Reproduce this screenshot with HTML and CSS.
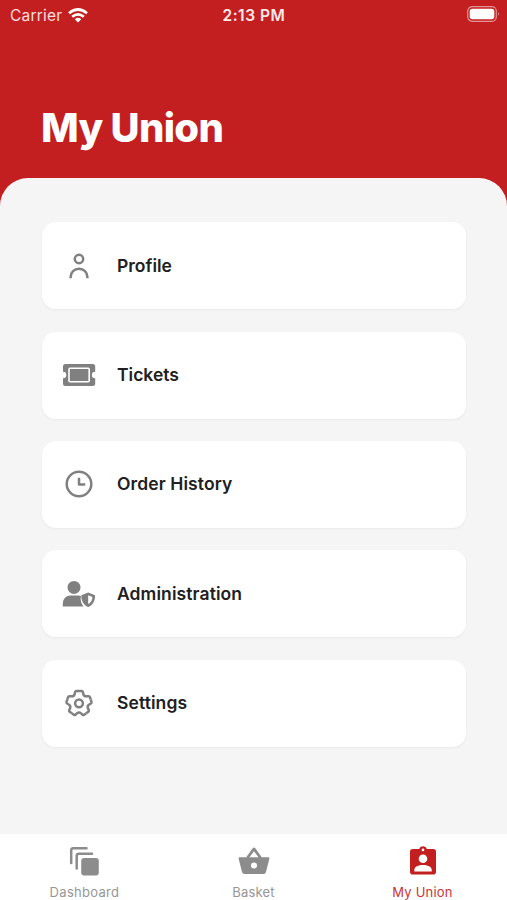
FILE: index.html
```html
<!DOCTYPE html>
<html lang="en">
<head>
<meta charset="utf-8">
<title>My Union</title>
<link rel="stylesheet" href="styles.css">
</head>
<body>
<header class="header">
  <div class="status">
    <div class="carrier"><span>Carrier</span>
      <svg width="20" height="15" viewBox="0 0 20 15" fill="none" stroke="#fff" stroke-width="2.7"><path d="M1 5.3Q10-2.3 19 5.3M4.2 8.8Q10 4 15.8 8.8"/><path d="M6.8 11.2Q10 8.4 13.2 11.2L10 14.4Z" fill="#fff" stroke="none"/></svg>
    </div>
    <span class="time">2:13 PM</span>
    <svg class="battery" width="33" height="16" viewBox="0 0 33 16"><rect x=".7" y=".7" width="28.6" height="14.6" rx="4.5" fill="none" stroke="#e49595" stroke-width="1.2"/><rect x="2.7" y="2.7" width="24.6" height="10.6" rx="2.7" fill="#fff"/><path d="M31 5.7q1.8 2.3 0 4.6z" fill="#e49595"/></svg>
  </div>
  <h1>My Union</h1>
</header>
<main class="sheet">
  <a class="card"><svg class="icon" viewBox="0 0 40 40"><g class="line"><circle cx="20" cy="13" r="4.2"/><path d="M11.600 32.300V31a8.400 8.200 0 0 1 16.800 0v1.300"/></g></svg><span>Profile</span></a>
  <a class="card"><svg class="icon" viewBox="0 0 40 40"><path d="M6.500 9h27.200a2.500 2.500 0 0 1 2.500 2.500v5.200a3.300 3.300 0 0 0 0 6.600v5.200a2.500 2.500 0 0 1-2.500 2.500H6.500A2.500 2.500 0 0 1 4 28.500v-5.200a3.300 3.300 0 0 0 0-6.600v-5.200A2.500 2.500 0 0 1 6.500 9z"/><rect x="10" y="13.300" width="20.200" height="13.400" rx="1" fill="none" stroke="#fff" stroke-width="1.600"/></svg><span>Tickets</span></a>
  <a class="card"><svg class="icon" viewBox="0 0 40 40"><g class="line"><circle cx="20" cy="20" r="12.300"/><path d="M20 13.800V20.500H26.200"/></g></svg><span class="wide">Order History</span></a>
  <a class="card"><svg class="icon" viewBox="0 0 40 40"><circle cx="15" cy="13.400" r="6.500"/><path d="M3.800 32.600v-3.500a7.500 7.500 0 0 1 7.500-7.500h8q1.700 0 2.700.5c-1 3.800.2 7.700 2.600 10.500z"/><path fill-rule="evenodd" d="M29.200 18.500l6.800 2.700c.3 5-1.700 9.600-6.800 11.900-5.100-2.300-7.100-6.900-6.800-11.900zM29.200 21.200v8.900c3-1.600 4.100-4.300 4.200-7.200z"/></svg><span class="wide">Administration</span></a>
  <a class="card"><svg class="icon" viewBox="0 0 40 40"><defs><path id="tooth" d="M0-12.300H2.600Q3.600-12.300 3.900-11.200L4.300-9.400Q4.880-6.710 7.610-7L9.450-7.170Q10.580-7.220 10.900-6.270L11.700-3.800"/></defs><g class="line" transform="translate(20 20.300)"><use href="#tooth"/><use href="#tooth" transform="rotate(72)"/><use href="#tooth" transform="rotate(144)"/><use href="#tooth" transform="rotate(216)"/><use href="#tooth" transform="rotate(288)"/><circle r="3.900"/></g></svg><span class="wide">Settings</span></a>
</main>
<nav class="tabs">
  <a class="tab"><svg width="34" height="34" viewBox="0 0 34 34"><g fill="none" stroke="#8c8c8c" stroke-width="2.500" stroke-linecap="round" stroke-linejoin="round"><path d="M3.200 18V5.500q0-2.200 2.200-2.200H18.500M8.700 23.500V11q0-2.200 2.200-2.200H24"/></g><rect x="13.200" y="13" width="17.600" height="17.600" rx="3" fill="#8c8c8c"/></svg><span class="dashboard">Dashboard</span></a>
  <a class="tab"><svg width="34" height="34" viewBox="0 0 34 34"><path d="M10.300 13L17 3.900 23.700 13" fill="none" stroke="#8c8c8c" stroke-width="2.700" stroke-linejoin="round"/><path fill="#8c8c8c" fill-rule="evenodd" d="M2.800 12.200H31.200q1.500 0 1.200 1.400L29 27q-.5 2-2.500 2H7.500q-2 0-2.500-2L1.600 13.600q-.3-1.400 1.200-1.400zM17 17.500a3 3 0 1 0 0 6 3 3 0 0 0 0-6z"/></svg><span>Basket</span></a>
  <a class="tab active"><svg width="34" height="34" viewBox="0 0 34 34"><path fill="#c41f20" d="M6.800 4h6.400a4 4 0 0 1 7.600 0h6.400a2.800 2.800 0 0 1 2.800 2.800v20a2.800 2.800 0 0 1-2.800 2.800H6.800A2.800 2.800 0 0 1 4 26.800v-20A2.800 2.800 0 0 1 6.800 4z"/><g fill="#fff"><circle cx="17" cy="4.900" r="1.300"/><circle cx="17" cy="13.700" r="4.300"/><path d="M8.300 26.500v-1.700c0-3.200 4.500-4.800 8.700-4.800s8.700 1.600 8.700 4.800v1.700z"/></g></svg><span>My Union</span></a>
</nav>
</body>
</html>
```
FILE: styles.css
```css
* { box-sizing: border-box; }
body {
  margin: 0;
  width: 507px;
  height: 900px;
  display: flex;
  flex-direction: column;
  overflow: hidden;
  background: #c41f20;
  font-family: Inter, "Liberation Sans", sans-serif;
}
.header { height: 177.500px; flex: none; color: #fff; }
.status {
  height: 30px;
  padding: 1px 7px 1px 10px;
  display: grid;
  grid-template-columns: 212.500px auto 1fr;
  align-items: center;
}
.carrier { display: flex; align-items: center; gap: 6px; font-size: 15.500px; letter-spacing: .2px; color: #fbdede; }
.time { font-size: 15.500px; font-weight: 600; letter-spacing: .500px; color: #fdeaea; }
.battery { justify-self: end; margin-bottom: 2px; }
h1 { margin: 74px 0 0 41px; font-size: 40px; line-height: 48px; font-weight: 800; letter-spacing: -.7px; }
.sheet {
  flex: 1;
  padding: 44.900px 41px 0 42px;
  display: flex;
  flex-direction: column;
  gap: 22.300px;
  background: #f5f5f5;
  border-radius: 28px 28px 0 0;
}
.card {
  height: 87px;
  flex: none;
  padding-left: 17px;
  display: flex;
  align-items: center;
  gap: 18px;
  background: #fff;
  border-radius: 14px;
  box-shadow: 0 1px 3px rgba(0, 0, 0, .05);
  color: #202020;
  font-size: 17.500px;
  line-height: 22px;
  font-weight: 600;
}
.wide { letter-spacing: .100px; }
.icon { width: 40px; height: 40px; fill: #808080; }
.line { fill: none; stroke: #808080; stroke-width: 2.500; stroke-linejoin: round; }
.tabs { height: 66px; flex: none; background: #fff; display: grid; grid-template-columns: repeat(3, 1fr); }
.tab {
  padding-top: 11px;
  display: flex;
  flex-direction: column;
  align-items: center;
  gap: 5px;
  color: #969696;
  font-size: 13px;
  line-height: 16px;
  letter-spacing: .2px;
}
.dashboard { letter-spacing: .3px; }
.tab.active { color: #c93436; }
```
